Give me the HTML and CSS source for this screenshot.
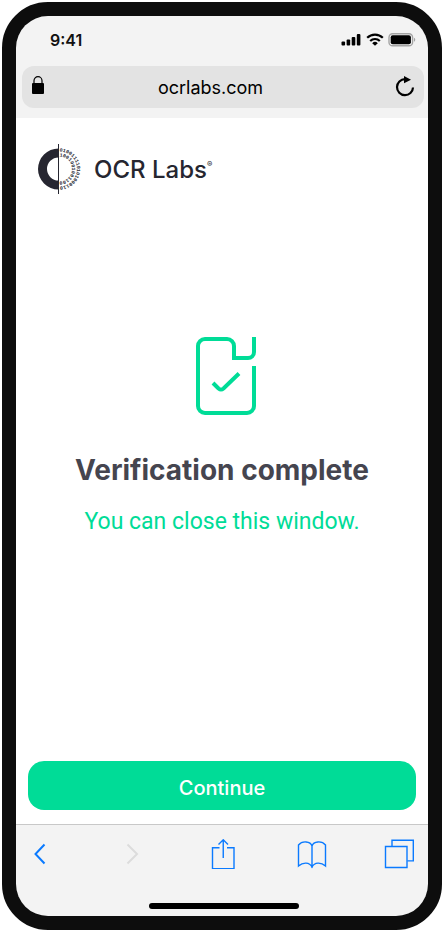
FILE: index.html
```
<!DOCTYPE html>
<html lang="en">

<head>
  <meta charset="UTF-8">
  <meta name="viewport" content="width=device-width, initial-scale=1.0">
  <title>OCR Labs | Verification complete</title>
  <link rel="stylesheet" href="styles.css">
</head>

<body>
  <div class="phone">
    <header class="browser-top">
      <div class="status">
        <span class="time">9:41</span>
        <div class="status-icons">
          <svg width="21" height="14" viewBox="0 0 21 14">
            <rect x=".5" y="8.500" width="3.600" height="4" rx="1" />
            <rect x="5.600" y="6.500" width="3.600" height="6" rx="1" />
            <rect x="10.700" y="4" width="3.600" height="8.500" rx="1" />
            <rect x="15.800" y="1" width="3.600" height="11.500" rx="1" />
          </svg>
          <svg width="18" height="14" viewBox="0 0 18 14">
            <path d="M1.200 4.800a11 11 0 0 1 15.600 0M4.200 8a6.800 6.800 0 0 1 9.600 0" fill="none" stroke="#000" stroke-width="2.200" />
            <path d="M9 12.800L6.200 10.200a4 4 0 0 1 5.600 0z" />
          </svg>
          <svg width="28" height="14" viewBox="0 0 28 14">
            <rect x="1" y=".8" width="23.600" height="12" rx="3.600" fill="none" stroke="#a4a4a4" stroke-width="1.400" />
            <rect x="2.700" y="2.300" width="20.200" height="9" rx="2" />
            <path d="M26 4.800v4a2.200 2.200 0 0 0 0-4z" fill="#a4a4a4" />
          </svg>
        </div>
      </div>
      <div class="address">
        <svg width="12" height="22" viewBox="0 0 12 22">
          <path d="M2 8V4.700a4 4 0 0 1 8 0V8" fill="none" stroke="#000" stroke-width="1.200" />
          <rect x="0" y="7" width="12" height="11" rx="1" />
        </svg>
        <span class="url">ocrlabs.com</span>
        <button class="reload" type="button" aria-label="Reload">
          <svg width="20" height="22" viewBox="0 0 20 22">
            <path d="M10 3.200A8 8 0 1 0 18 11.500" fill="none" stroke="#000" stroke-width="2.200" />
            <path d="M9 0v7.200l7-3.400z" />
          </svg>
        </button>
      </div>
    </header>

    <main class="page">
      <a class="logo" href="#">
        <svg class="logo-mark" width="46" height="50" viewBox="0 0 46 50">
          <defs>
            <path id="ring-outer" d="M21.500 7.500a17.500 17.500 0 0 1 0 35" />
            <path id="ring-inner" d="M21.500 12.500a12.500 12.500 0 0 1 0 25" />
          </defs>
          <path d="M20.500 4.500a20.500 20.500 0 0 0 0 41v-9a11.500 11.500 0 0 1 0-23z" fill="#262630" />
          <path d="M20.500 0v50" stroke="#262630" stroke-width="1" />
          <text class="digits"><textPath href="#ring-outer">010011110101000110</textPath></text>
          <text class="digits"><textPath href="#ring-inner">1001001001100</textPath></text>
        </svg>
        <span class="logo-name">OCR Labs<sup>®</sup></span>
      </a>

      <section class="message">
        <svg width="68" height="80" viewBox="-8 0 68 80" fill="none" stroke="#00dc97" stroke-width="4">
          <path d="M58 30v40a7 7 0 0 1-7 7H9a7 7 0 0 1-7-7V10a7 7 0 0 1 7-7h22a7 7 0 0 1 7 7v12h14a6 6 0 0 0 6-6V1" />
          <path d="M17 47l5.500 5.500a4 4 0 0 0 5 0L43 37.500" />
        </svg>
        <h1>Verification complete</h1>
        <p>You can close this window.</p>
      </section>

      <button class="continue" type="button">Continue</button>
    </main>

    <footer class="browser-bottom">
      <nav class="toolbar">
        <button type="button" aria-label="Back">
          <svg width="30" height="30" viewBox="0 0 30 30">
            <path d="M10.500 5.500L1.500 15l9 9.500" stroke-width="2" />
          </svg>
        </button>
        <button class="disabled" type="button" aria-label="Forward" disabled>
          <svg width="30" height="30" viewBox="0 0 30 30">
            <path d="M5.500 5.500l9.500 9.500-9.500 9.500" stroke-width="2" />
          </svg>
        </button>
        <button type="button" aria-label="Share">
          <svg width="30" height="30" viewBox="0 0 30 30">
            <path d="M10.500 8.700h-7v21h21.500v-21h-7M14.250 19V.8M9.500 5.500L14.250.8 19 5.500" />
          </svg>
        </button>
        <button type="button" aria-label="Bookmarks">
          <svg width="30" height="30" viewBox="0 0 30 30">
            <path d="M15 7C13.500 2 5 1.500 1.500 6v21c4.500-4 11-4 13.500 1 2.500-5 9-5 13.500-1V6C25 1.500 16.500 2 15 7zM15 7v22" />
          </svg>
        </button>
        <button type="button" aria-label="Tabs">
          <svg width="30" height="30" viewBox="0 0 30 30">
            <path d="M1.500 7.500h21.500v21H1.500zM8 7V1.200h21.300v20.700h-5.500" />
          </svg>
        </button>
      </nav>
      <div class="home-bar"></div>
    </footer>
  </div>
</body>

</html>
```

FILE: styles.css
```
* {
  margin: 0;
  padding: 0;
  box-sizing: border-box;
}

body {
  background-color: #fff;
  padding: 2px 0 0 2px;
  font-family: Inter, "Liberation Sans", sans-serif;
}

button {
  border: none;
  background: none;
  font-family: inherit;
  cursor: pointer;
}

svg {
  display: block;
}

.phone {
  display: flex;
  flex-direction: column;
  min-height: calc(100vh - 2px);
  border: 14px solid #0d0d0d;
  border-radius: 46px;
  background-color: #0d0d0d;
}

/* status bar and address bar */
.browser-top {
  padding: 0 4px 10px 6px;
  background-color: #f3f3f3;
  border-radius: 32px 32px 0 0;
}

.status {
  display: flex;
  align-items: center;
  justify-content: space-between;
  height: 50px;
  padding: 0 8px 2px 28px;
}

.time {
  font-size: 16px;
  font-weight: 600;
  color: #111;
}

.status-icons {
  display: flex;
  gap: 4px;
}

.address {
  display: flex;
  align-items: center;
  height: 42px;
  padding: 0 9px 0 10px;
  border-radius: 12px;
  background-color: #e3e3e3;
}

.url {
  flex: 1;
  padding-right: 18px;
  font-size: 18px;
  text-align: center;
}

/* page */
.page {
  flex: 1;
  display: flex;
  flex-direction: column;
  padding: 26px 12px 14px;
  background-color: #fff;
}

.logo {
  display: flex;
  align-items: center;
  gap: 10px;
  padding-left: 10px;
  color: #262630;
  text-decoration: none;
}

.logo-name {
  font-size: 24px;
  font-weight: 500;
}

.logo-name sup {
  font-size: 8px;
  vertical-align: 11px;
}

.digits {
  font-family: "Liberation Mono", monospace;
  font-size: 5px;
  font-weight: bold;
  fill: #262630;
}

.message {
  flex: 1;
  display: flex;
  flex-direction: column;
  align-items: center;
  padding-top: 142px;
  text-align: center;
}

h1 {
  margin-top: 34px;
  font-size: 28px;
  line-height: 40px;
  font-weight: 700;
  color: #45454f;
  white-space: nowrap;
}

.message p {
  margin-top: 16px;
  font-family: Roboto, sans-serif;
  font-size: 23px;
  line-height: 32px;
  color: #00dc97;
}

.continue {
  height: 49px;
  padding-top: 4px;
  border-radius: 16px;
  background-color: #00dc97;
  color: #fff;
  font-size: 20px;
  font-weight: 500;
}

/* browser toolbar */
.browser-bottom {
  padding: 14px 14px 7px 18px;
  border-top: 1px solid #c8c8c8;
  border-radius: 0 0 32px 32px;
  background-color: #f3f3f3;
}

.toolbar {
  display: flex;
  justify-content: space-between;
}

.toolbar svg {
  fill: none;
  stroke: #0a7aff;
  stroke-width: 1.4;
}

.toolbar .disabled svg {
  stroke: #dcdcdc;
}

.home-bar {
  width: 150px;
  height: 6px;
  margin: 34px auto 0;
  border-radius: 3px;
  background-color: #000;
}
```
